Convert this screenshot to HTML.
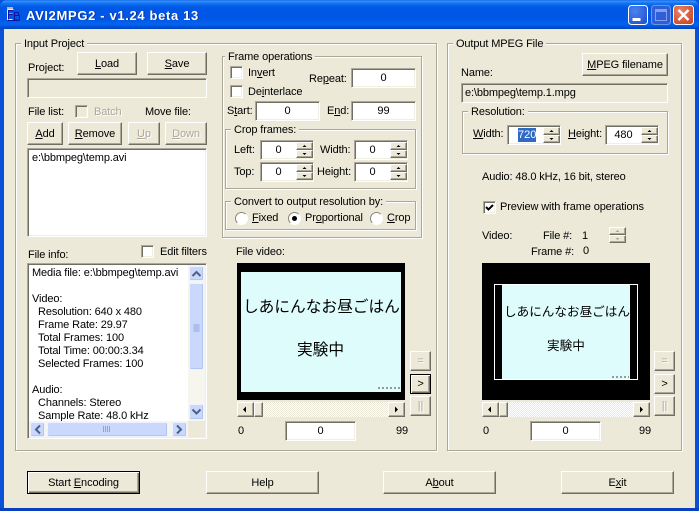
<!DOCTYPE html>
<html><head><meta charset="utf-8"><style>
html,body{margin:0;padding:0;width:699px;height:511px;overflow:hidden;background:#0a50d8}
*{box-sizing:border-box}
#w{position:absolute;left:0;top:0;width:699px;height:511px;font:11px/14px "Liberation Sans","Noto Sans CJK JP",sans-serif;color:#000;overflow:hidden}
#w div,#w span.t{position:absolute}
.t{white-space:nowrap;height:14px;margin-top:1px;letter-spacing:-.12px}
.g{border:1px solid #aca899;box-shadow:1px 1px 0 #fff,inset 1px 1px 0 #fff}
.l{background:#ece9d8;padding:0 3px;height:14px;white-space:nowrap;margin-top:1px;letter-spacing:-.12px}
.b{background:#ece9d8;border:1px solid;border-color:#fff #716f64 #716f64 #fff;box-shadow:inset -1px -1px 0 #aca899;display:flex;align-items:center;justify-content:center;white-space:nowrap;letter-spacing:-.1px}
.d{color:#aca899;text-shadow:1px 1px 0 #fff}
.k{border:1px solid #000;box-shadow:inset 1px 1px 0 #fff,inset -1px -1px 0 #716f64,inset -2px -2px 0 #aca899}
.f{background:#fff;border:1px solid;border-color:#aca899 #fff #fff #aca899;box-shadow:inset 1px 1px 0 #716f64,inset -1px -1px 0 #f1efe2;display:flex;align-items:center;justify-content:center;white-space:nowrap}
.c{width:13px;height:13px;background:#fff;border:1px solid;border-color:#aca899 #fff #fff #aca899;box-shadow:inset 1px 1px 0 #716f64,inset -1px -1px 0 #f1efe2}
.r{width:13px;height:13px;border-radius:50%;background:#fff;border:1px solid;border-color:#8a8778 #fff #fff #8a8778}
.s{width:17px;background:#ece9d8;border:1px solid;border-color:#fff #716f64 #716f64 #fff;box-shadow:inset -1px -1px 0 #aca899}
.xb{background:#c9d8fc;border:1px solid #eef2fd;border-radius:2px;box-shadow:inset -1px -1px 0 #b2c6f2}
.tr{background:repeating-conic-gradient(#ece9d8 0 25%,#fff 0 50%) 0 0/2px 2px}
.v{background:#000}
.cy{background:#dffcfd}
</style></head><body><div id="w">
<div style="left:0;top:0;width:699px;height:511px;background:#0a50d8"></div>
<div style="left:0;top:0;width:699px;height:29px;border-radius:7px 7px 0 0;background:linear-gradient(#0a5ae0 0,#3a93ff 1px,#1477f0 3px,#0058e6 7px,#0055e5 19px,#0365ef 24px,#0052d8 27px,#0042b8 29px)"></div>
<div style="left:4px;top:29px;width:691px;height:479px;background:#ece9d8"></div>
<div style="left:0;top:508px;width:699px;height:3px;background:#0a3fc0"></div>

<!-- title -->
<svg style="position:absolute;left:6px;top:7px" width="15" height="16" viewBox="0 0 15 16"><rect x="1" y="0" width="6" height="2" fill="#b5b5b5"/><path d="M1.500 2.500h6M1.500 2.500v10h5M1.500 7h5" fill="none" stroke="#e6ecff" stroke-width="1"/><path d="M8.500 5.500h4v3h-4zM8.500 8.500h5v4.500h-5zM8.500 5.500v7.500M2 13.500h11" fill="none" stroke="#12129a" stroke-width="1"/><path d="M2.500 3.500h5M2.500 3.500v9M2.500 7.500h4" fill="none" stroke="#12129a" stroke-width="1"/></svg>
<span class="t" style="left:26px;top:7px;color:#0a2f9a;font:bold 13px/14px 'Liberation Sans',sans-serif;letter-spacing:.65px;margin:2px 0 0 1px;height:15px">AVI2MPG2 - v1.24 beta 13</span>
<span class="t" style="left:26px;top:8px;color:#fff;font:bold 13px/14px 'Liberation Sans',sans-serif;letter-spacing:.65px;height:15px">AVI2MPG2 - v1.24 beta 13</span>

<!-- caption buttons -->
<svg style="position:absolute;left:627px;top:4px" width="68" height="22" viewBox="0 0 68 22">
<defs><radialGradient id="bl" cx=".35" cy=".3" r=".9"><stop offset="0" stop-color="#4d82f0"/><stop offset="1" stop-color="#1a4fd0"/></radialGradient><radialGradient id="rd" cx=".35" cy=".3" r=".9"><stop offset="0" stop-color="#e8826a"/><stop offset="1" stop-color="#c8401c"/></radialGradient></defs>
<rect x="1.500" y="1.500" width="19" height="19" rx="3" fill="url(#bl)" stroke="#fff"/>
<rect x="5.500" y="14" width="8" height="3" fill="#fff"/>
<rect x="24.500" y="1.500" width="19" height="19" rx="3" fill="#2f5fd8" stroke="#6f95e8"/>
<rect x="28.500" y="5.500" width="11" height="11" fill="none" stroke="#7fa0ec"/><rect x="28" y="5" width="12" height="3" fill="#7fa0ec"/>
<rect x="46.500" y="1.500" width="20" height="19" rx="3" fill="url(#rd)" stroke="#fff"/>
<path d="M51.500 6l10 10M61.500 6l-10 10" stroke="#fff" stroke-width="2.400"/>
</svg>

<!-- Input Project -->
<div class="g" style="left:15px;top:43px;width:422px;height:408px"></div>
<div class="l" style="left:21px;top:36px">Input Project</div>
<span class="t" style="left:28px;top:60px">Project:</span>
<div class="b" style="left:77px;top:52px;width:60px;height:23px"><span><u>L</u>oad</span></div>
<div class="b" style="left:147px;top:52px;width:60px;height:23px"><span><u>S</u>ave</span></div>
<div class="f" style="left:27px;top:78px;width:180px;height:20px;background:#ece9d8;box-shadow:inset 1px 1px 0 #716f64"></div>
<span class="t" style="left:28px;top:104px">File list:</span>
<div class="c" style="left:75px;top:105px;background:#ece9d8"></div>
<span class="t d" style="left:94px;top:104px">Batch</span>
<span class="t" style="left:145px;top:104px">Move file:</span>
<div class="b" style="left:27px;top:122px;width:36px;height:23px"><span><u>A</u>dd</span></div>
<div class="b" style="left:68px;top:122px;width:54px;height:23px"><span><u>R</u>emove</span></div>
<div class="b d" style="left:128px;top:122px;width:32px;height:23px"><span><u>U</u>p</span></div>
<div class="b d" style="left:165px;top:122px;width:42px;height:23px"><span><u>D</u>own</span></div>
<div class="f" style="left:27px;top:148px;width:180px;height:89px"></div>
<span class="t" style="left:32px;top:150px">e:\bbmpeg\temp.avi</span>

<span class="t" style="left:28px;top:247px">File info:</span>
<div class="c" style="left:141px;top:245px"></div>
<span class="t" style="left:160px;top:244px">Edit filters</span>
<div class="f" style="left:27px;top:263px;width:180px;height:176px"></div>
<span class="t" style="left:32px;top:265px">Media file: e:\bbmpeg\temp.avi</span>
<span class="t" style="left:32px;top:291px">Video:</span>
<span class="t" style="left:38px;top:304px">Resolution: 640 x 480</span>
<span class="t" style="left:38px;top:317px">Frame Rate: 29.97</span>
<span class="t" style="left:38px;top:330px">Total Frames: 100</span>
<span class="t" style="left:38px;top:343px">Total Time: 00:00:3.34</span>
<span class="t" style="left:38px;top:356px">Selected Frames: 100</span>
<span class="t" style="left:32px;top:382px">Audio:</span>
<span class="t" style="left:38px;top:395px">Channels: Stereo</span>
<span class="t" style="left:38px;top:408px">Sample Rate: 48.0 kHz</span>
<div style="left:188px;top:265px;width:17px;height:156px;background:#f6f5ee"></div>
<div style="left:29px;top:421px;width:176px;height:16px;background:#f6f5ee"></div>
<div style="left:188px;top:421px;width:17px;height:16px;background:#ece9d8"></div>
<div class="xb" style="left:189px;top:266px;width:15px;height:15px"></div>
<div class="xb" style="left:189px;top:283px;width:15px;height:87px"></div>
<div class="xb" style="left:189px;top:404px;width:15px;height:16px"></div>
<div class="xb" style="left:30px;top:422px;width:15px;height:15px"></div>
<div class="xb" style="left:47px;top:422px;width:121px;height:15px"></div>
<div class="xb" style="left:172px;top:422px;width:15px;height:15px"></div>
<svg style="position:absolute;left:0;top:0" width="699" height="511" fill="none"><path d="M192.500 276l4-4 4 4M192.500 409.500l4 4 4-4M40 425.500l-4 4 4 4M177 425.500l4 4-4 4" stroke="#4d6185" stroke-width="2"/><path d="M193.500 325h6M193.500 327h6M193.500 329h6M193.500 331h6M103.500 426v6M105.500 426v6M107.500 426v6M109.500 426v6" stroke="#8ea5d8"/></svg>

<!-- Frame operations -->
<div class="g" style="left:222px;top:56px;width:200px;height:182px"></div>
<div class="l" style="left:225px;top:49px">Frame operations</div>
<div class="c" style="left:230px;top:66px"></div>
<span class="t" style="left:248px;top:65px">In<u>v</u>ert</span>
<div class="c" style="left:230px;top:85px"></div>
<span class="t" style="left:248px;top:84px">De<u>i</u>nterlace</span>
<span class="t" style="left:309px;top:71px">Re<u>p</u>eat:</span>
<div class="f" style="left:351px;top:68px;width:65px;height:20px">0</div>
<span class="t" style="left:227px;top:103px">S<u>t</u>art:</span>
<div class="f" style="left:255px;top:101px;width:65px;height:20px">0</div>
<span class="t" style="left:327px;top:103px">E<u>n</u>d:</span>
<div class="f" style="left:351px;top:101px;width:65px;height:20px">99</div>

<div class="g" style="left:225px;top:129px;width:191px;height:60px"></div>
<div class="l" style="left:231px;top:122px">Crop frames:</div>
<span class="t" style="left:234px;top:142px">Left:</span>
<div class="f" style="left:260px;top:140px;width:54px;height:20px;padding-right:17px">0</div>
<span class="t" style="left:320px;top:142px">Width:</span>
<div class="f" style="left:354px;top:140px;width:54px;height:20px;padding-right:17px">0</div>
<span class="t" style="left:234px;top:164px">Top:</span>
<div class="f" style="left:260px;top:162px;width:54px;height:20px;padding-right:17px">0</div>
<span class="t" style="left:317px;top:164px">Height:</span>
<div class="f" style="left:354px;top:162px;width:54px;height:20px;padding-right:17px">0</div>
<div class="s" style="left:296px;top:142px;height:8px"></div><div class="s" style="left:296px;top:150px;height:8px"></div>
<div class="s" style="left:390px;top:142px;height:8px"></div><div class="s" style="left:390px;top:150px;height:8px"></div>
<div class="s" style="left:296px;top:164px;height:8px"></div><div class="s" style="left:296px;top:172px;height:8px"></div>
<div class="s" style="left:390px;top:164px;height:8px"></div><div class="s" style="left:390px;top:172px;height:8px"></div>

<div class="g" style="left:225px;top:201px;width:191px;height:29px"></div>
<div class="l" style="left:231px;top:194px">Convert to output resolution by:</div>
<div class="r" style="left:235px;top:212px"></div>
<span class="t" style="left:252px;top:210px"><u>F</u>ixed</span>
<div class="r" style="left:288px;top:212px"></div>
<div style="left:292px;top:216px;width:5px;height:5px;border-radius:50%;background:#000"></div>
<span class="t" style="left:305px;top:210px">Pr<u>o</u>portional</span>
<div class="r" style="left:370px;top:212px"></div>
<span class="t" style="left:387px;top:210px"><u>C</u>rop</span>

<!-- File video -->
<span class="t" style="left:236px;top:244px">File video:</span>
<div class="v" style="left:237px;top:263px;width:168px;height:137px"></div>
<div class="cy" style="left:241px;top:272px;width:160px;height:120px"></div>
<span class="t" style="left:243px;top:298px;font-size:15.700px;line-height:18px;height:18px;letter-spacing:0">しあにんなお昼ごはん</span>
<span class="t" style="left:297px;top:341px;font-size:15.700px;line-height:18px;height:18px;letter-spacing:0">実験中</span>
<div style="left:378px;top:387px;width:22px;height:2px;background:repeating-linear-gradient(90deg,#999 0 2px,#dffcfd 2px 4px)"></div>
<div class="b d" style="left:410px;top:351px;width:21px;height:20px">=</div>
<div class="b k" style="left:410px;top:374px;width:21px;height:20px">&gt;</div>
<div class="b d" style="left:410px;top:396px;width:21px;height:20px">||</div>
<div class="tr" style="left:237px;top:402px;width:168px;height:15px"></div>
<div class="b" style="left:237px;top:402px;width:17px;height:15px"></div>
<div class="b" style="left:254px;top:402px;width:9px;height:15px"></div>
<div class="b" style="left:388px;top:402px;width:17px;height:15px"></div>
<span class="t" style="left:238px;top:423px">0</span>
<div class="f" style="left:285px;top:421px;width:71px;height:20px">0</div>
<span class="t" style="left:396px;top:423px">99</span>

<!-- Output -->
<div class="g" style="left:447px;top:43px;width:235px;height:408px"></div>
<div class="l" style="left:453px;top:36px">Output MPEG File</div>
<div class="b" style="left:582px;top:53px;width:86px;height:23px"><span><u>M</u>PEG filename</span></div>
<span class="t" style="left:461px;top:65px">Name:</span>
<div class="f" style="left:461px;top:83px;width:207px;height:20px;background:#ece9d8;box-shadow:inset 1px 1px 0 #716f64"></div>
<span class="t" style="left:465px;top:85px">e:\bbmpeg\temp.1.mpg</span>
<div class="g" style="left:462px;top:111px;width:206px;height:43px"></div>
<div class="l" style="left:468px;top:104px">Resolution:</div>
<span class="t" style="left:473px;top:126px"><u>W</u>idth:</span>
<div class="f" style="left:507px;top:125px;width:54px;height:20px"></div>
<div style="left:518px;top:128px;width:18px;height:14px;background:#316ac5;color:#fff;text-align:center">720</div>
<span class="t" style="left:568px;top:126px"><u>H</u>eight:</span>
<div class="f" style="left:605px;top:125px;width:54px;height:20px;padding-right:17px">480</div>
<div class="s" style="left:543px;top:127px;height:8px"></div><div class="s" style="left:543px;top:135px;height:8px"></div>
<div class="s" style="left:641px;top:127px;height:8px"></div><div class="s" style="left:641px;top:135px;height:8px"></div>
<span class="t" style="left:482px;top:169px">Audio: 48.0 kHz, 16 bit, stereo</span>
<div class="c" style="left:483px;top:201px"></div>
<svg style="position:absolute;left:483px;top:201px" width="13" height="13" fill="none"><path d="M3 6l2.500 2.500L10 4" stroke="#000" stroke-width="2"/></svg>
<span class="t" style="left:500px;top:199px">Preview with frame operations</span>
<span class="t" style="left:482px;top:228px">Video:</span>
<span class="t" style="left:543px;top:228px">File #:</span>
<span class="t" style="left:582px;top:228px">1</span>
<div class="s" style="left:609px;top:227px;height:8px"></div><div class="s" style="left:609px;top:235px;height:8px"></div>
<span class="t" style="left:531px;top:244px">Frame #:</span>
<span class="t" style="left:583px;top:243px">0</span>

<div class="v" style="left:482px;top:263px;width:168px;height:137px"></div>
<div style="left:494px;top:284px;width:144px;height:96px;border:1px solid #fff;background:#000"></div>
<div class="cy" style="left:502px;top:285px;width:128px;height:94px"></div>
<span class="t" style="left:504px;top:303px;font-size:12.600px;line-height:16px;height:16px;letter-spacing:0">しあにんなお昼ごはん</span>
<span class="t" style="left:547px;top:337px;font-size:12.600px;line-height:16px;height:16px;letter-spacing:0">実験中</span>
<div style="left:612px;top:376px;width:17px;height:2px;background:repeating-linear-gradient(90deg,#999 0 2px,#dffcfd 2px 4px)"></div>
<div class="b d" style="left:654px;top:351px;width:21px;height:20px">=</div>
<div class="b" style="left:654px;top:374px;width:21px;height:20px">&gt;</div>
<div class="b d" style="left:654px;top:396px;width:21px;height:20px">||</div>
<div class="tr" style="left:482px;top:402px;width:168px;height:15px"></div>
<div class="b" style="left:482px;top:402px;width:17px;height:15px"></div>
<div class="b" style="left:499px;top:402px;width:9px;height:15px"></div>
<div class="b" style="left:633px;top:402px;width:17px;height:15px"></div>
<span class="t" style="left:483px;top:423px">0</span>
<div class="f" style="left:530px;top:421px;width:71px;height:20px">0</div>
<span class="t" style="left:639px;top:423px">99</span>

<svg style="position:absolute;left:0;top:0" width="699" height="511">
<g fill="#000">
<path d="M304.500 145l-2 2h4zM304.500 155l-2-2h4zM398.500 145l-2 2h4zM398.500 155l-2-2h4zM304.500 167l-2 2h4zM304.500 177l-2-2h4zM398.500 167l-2 2h4zM398.500 177l-2-2h4zM551.500 130l-2 2h4zM551.500 140l-2-2h4zM649.500 130l-2 2h4zM649.500 140l-2-2h4z"/>
<path d="M243 409.500l3-3v6zM398 409.500l-3-3v6zM488 409.500l3-3v6zM643 409.500l-3-3v6z"/>
</g>
<path d="M617.500 230l-2 2h4zM617.500 240l-2-2h4z" fill="#aca899"/>
</svg>

<!-- bottom -->
<div class="b k" style="left:27px;top:471px;width:113px;height:23px"><span>Start <u>E</u>ncoding</span></div>
<div class="b" style="left:206px;top:471px;width:113px;height:23px">Help</div>
<div class="b" style="left:383px;top:471px;width:113px;height:23px"><span>A<u>b</u>out</span></div>
<div class="b" style="left:561px;top:471px;width:113px;height:23px"><span>E<u>x</u>it</span></div>
</div></body></html>
